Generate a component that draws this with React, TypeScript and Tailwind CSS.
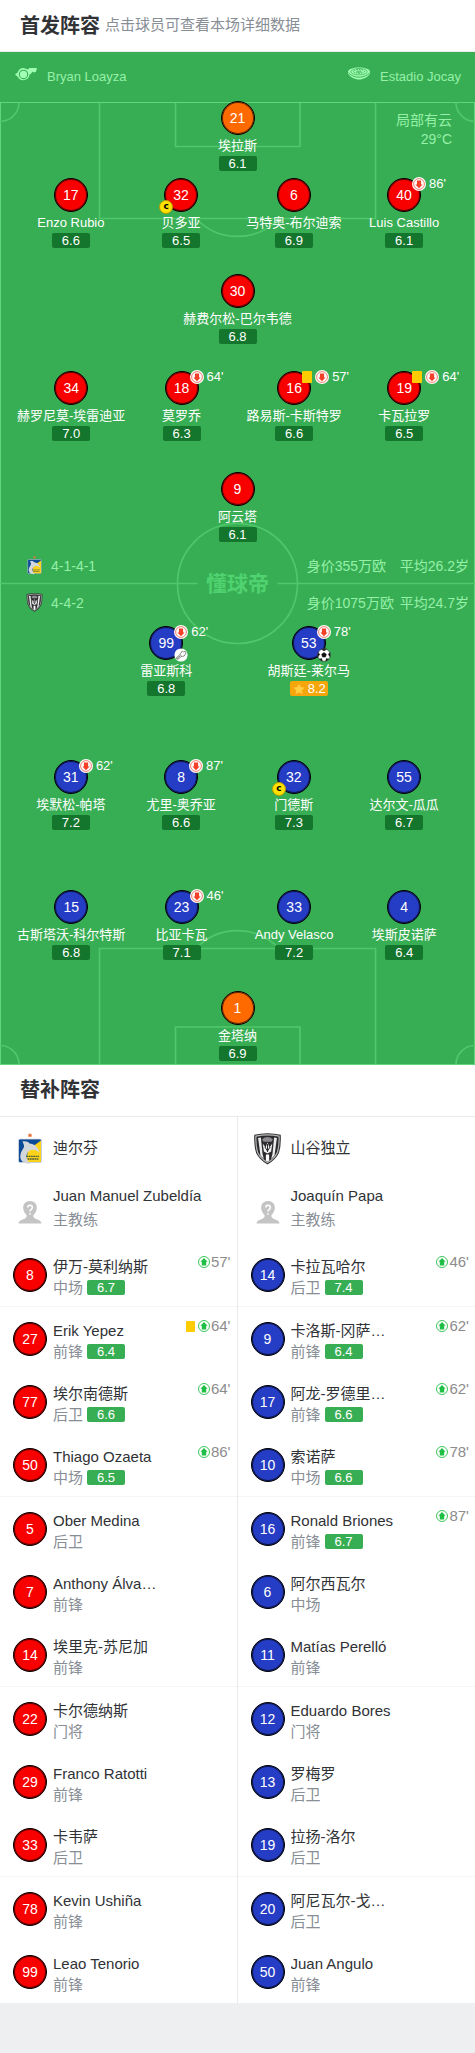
import type { ReactNode } from 'react';

type Kit = 'red' | 'blue' | 'keeper';

interface Starter {
  no: number;
  name: string;
  rating: string;
  off?: string;
  yellow?: boolean;
  captain?: boolean;
  mark?: 'assist' | 'goal';
  best?: boolean;
}

interface Line {
  kit: Kit;
  gap: string;
  players: Starter[];
}

interface Sub {
  no: number;
  name: string;
  pos: string;
  rating?: string;
  on?: string;
  yellow?: boolean;
}

const HOME_LINES: Line[] = [
  { kit: 'keeper', gap: '', players: [{ no: 21, name: '埃拉斯', rating: '6.1' }] },
  {
    kit: 'red',
    gap: 'mt-[7px]',
    players: [
      { no: 17, name: 'Enzo Rubio', rating: '6.6' },
      { no: 32, name: '贝多亚', rating: '6.5', captain: true },
      { no: 6, name: '马特奥-布尔迪索', rating: '6.9' },
      { no: 40, name: 'Luis Castillo', rating: '6.1', off: "86'" },
    ],
  },
  { kit: 'red', gap: 'mt-[26px]', players: [{ no: 30, name: '赫费尔松-巴尔韦德', rating: '6.8' }] },
  {
    kit: 'red',
    gap: 'mt-[27px]',
    players: [
      { no: 34, name: '赫罗尼莫-埃雷迪亚', rating: '7.0' },
      { no: 18, name: '莫罗乔', rating: '6.3', off: "64'" },
      { no: 16, name: '路易斯-卡斯特罗', rating: '6.6', off: "57'", yellow: true },
      { no: 19, name: '卡瓦拉罗', rating: '6.5', off: "64'", yellow: true },
    ],
  },
  { kit: 'red', gap: 'mt-[31px]', players: [{ no: 9, name: '阿云塔', rating: '6.1' }] },
];

const AWAY_LINES: Line[] = [
  {
    kit: 'blue',
    gap: '',
    players: [
      { no: 99, name: '雷亚斯科', rating: '6.8', off: "62'", mark: 'assist' },
      { no: 53, name: '胡斯廷-莱尔马', rating: '8.2', off: "78'", mark: 'goal', best: true },
    ],
  },
  {
    kit: 'blue',
    gap: 'mt-16',
    players: [
      { no: 31, name: '埃默松-帕塔', rating: '7.2', off: "62'" },
      { no: 8, name: '尤里-奥乔亚', rating: '6.6', off: "87'" },
      { no: 32, name: '门德斯', rating: '7.3', captain: true },
      { no: 55, name: '达尔文-瓜瓜', rating: '6.7' },
    ],
  },
  {
    kit: 'blue',
    gap: 'mt-15',
    players: [
      { no: 15, name: '古斯塔沃-科尔特斯', rating: '6.8' },
      { no: 23, name: '比亚卡瓦', rating: '7.1', off: "46'" },
      { no: 33, name: 'Andy Velasco', rating: '7.2' },
      { no: 4, name: '埃斯皮诺萨', rating: '6.4' },
    ],
  },
  { kit: 'keeper', gap: 'mt-[31px]', players: [{ no: 1, name: '金塔纳', rating: '6.9' }] },
];

const HOME_SUBS: Sub[] = [
  { no: 8, name: '伊万-莫利纳斯', pos: '中场', rating: '6.7', on: "57'" },
  { no: 27, name: 'Erik Yepez', pos: '前锋', rating: '6.4', on: "64'", yellow: true },
  { no: 77, name: '埃尔南德斯', pos: '后卫', rating: '6.6', on: "64'" },
  { no: 50, name: 'Thiago Ozaeta', pos: '中场', rating: '6.5', on: "86'" },
  { no: 5, name: 'Ober Medina', pos: '后卫' },
  { no: 7, name: 'Anthony Álva…', pos: '前锋' },
  { no: 14, name: '埃里克-苏尼加', pos: '前锋' },
  { no: 22, name: '卡尔德纳斯', pos: '门将' },
  { no: 29, name: 'Franco Ratotti', pos: '前锋' },
  { no: 33, name: '卡韦萨', pos: '后卫' },
  { no: 78, name: 'Kevin Ushiña', pos: '前锋' },
  { no: 99, name: 'Leao Tenorio', pos: '前锋' },
];

const AWAY_SUBS: Sub[] = [
  { no: 14, name: '卡拉瓦哈尔', pos: '后卫', rating: '7.4', on: "46'" },
  { no: 9, name: '卡洛斯-冈萨…', pos: '前锋', rating: '6.4', on: "62'" },
  { no: 17, name: '阿龙-罗德里…', pos: '前锋', rating: '6.6', on: "62'" },
  { no: 10, name: '索诺萨', pos: '中场', rating: '6.6', on: "78'" },
  { no: 16, name: 'Ronald Briones', pos: '前锋', rating: '6.7', on: "87'" },
  { no: 6, name: '阿尔西瓦尔', pos: '中场' },
  { no: 11, name: 'Matías Perelló', pos: '前锋' },
  { no: 12, name: 'Eduardo Bores', pos: '门将' },
  { no: 13, name: '罗梅罗', pos: '后卫' },
  { no: 19, name: '拉扬-洛尔', pos: '后卫' },
  { no: 20, name: '阿尼瓦尔-戈…', pos: '后卫' },
  { no: 50, name: 'Juan Angulo', pos: '前锋' },
];

const KIT_BG: Record<Kit, string> = {
  red: 'bg-[#f80000]',
  blue: 'bg-[#253cc4]',
  keeper: 'bg-[#ff6a00]',
};

const LINE_COLS: Record<number, string> = {
  1: 'grid-cols-1',
  2: 'grid-cols-2 px-[95px]',
  4: 'grid-cols-[108fr_113fr_113fr_108fr] px-[17px]',
};

function Shirt({ no, kit }: { no: number; kit: Kit }) {
  return (
    <span
      className={`flex size-[34px] shrink-0 items-center justify-center rounded-full border border-black text-sm text-white ring-1 ring-black/60 ring-inset ${KIT_BG[kit]}`}
    >
      {no}
    </span>
  );
}

function SubArrow({ dir }: { dir: 'in' | 'out' }) {
  if (dir === 'in') {
    return (
      <svg viewBox="0 0 12 12" className="size-3 shrink-0" aria-hidden="true">
        <circle cx="6" cy="6" r="5.5" fill="#fff" stroke="#28bf4b" strokeWidth="0.9" />
        <path d="M6 2 L9.6 5.8 H8.2 V9.4 H3.8 V5.8 H2.4 Z" fill="#1fbf45" />
      </svg>
    );
  }
  return (
    <svg viewBox="0 0 14 14" className="size-[14px] shrink-0" aria-hidden="true">
      <circle cx="7" cy="7" r="7" fill="#fff" />
      <circle cx="7" cy="7" r="5.4" fill="none" stroke="#f25b48" strokeWidth="0.8" />
      <path d="M7 11.2 L10.6 7.4 H9.1 V3.5 H4.9 V7.4 H3.4 Z" fill="#f43f28" />
    </svg>
  );
}

function YellowCard({ className }: { className: string }) {
  return <span className={`shrink-0 rounded-[1px] bg-[#ffcc00] ${className}`} />;
}

function AssistIcon() {
  return (
    <svg viewBox="0 0 14 14" className="size-[14px]" aria-hidden="true">
      <circle cx="7" cy="7" r="6.6" fill="#fff" />
      <path
        d="M2.4 9.6 L6 6.6 L8.2 3 L9.4 4 L11.2 3.2 L12 5 L10.2 8 L7.2 8.6 L4 11.2 L2.4 10.8 Z M6 6.6 L7.6 8 M2.8 10.6 L6.2 8"
        fill="#fff"
        stroke="#6d6d6d"
        strokeWidth="0.8"
      />
    </svg>
  );
}

function GoalIcon() {
  return (
    <svg viewBox="0 0 14 14" className="size-[14px]" aria-hidden="true">
      <circle cx="7" cy="7" r="6.3" fill="#fff" stroke="#222" strokeWidth="0.6" />
      <g fill="#111" stroke="#111" strokeWidth="0.5">
        <path d="M7 4.5 L9.4 6.3 L8.5 9.1 H5.5 L4.6 6.3 Z" />
        <path d="M4.6 1.3 H9.4 L7 2.9 Z" />
        <path d="M12.9 4.6 L13.1 8.4 L11.2 6.6 Z" />
        <path d="M1.1 4.6 L0.9 8.4 L2.8 6.6 Z" />
        <path d="M2.4 11.2 L5.2 13 L4.6 10.5 Z" />
        <path d="M11.6 11.2 L8.8 13 L9.4 10.5 Z" />
      </g>
    </svg>
  );
}

function StarIcon() {
  return (
    <svg viewBox="0 0 14 14" className="size-[14px] shrink-0" aria-hidden="true">
      <path
        d="M7 0.8 L9 4.7 L13.4 5.3 L10.2 8.4 L11 12.9 L7 10.8 L3 12.9 L3.8 8.4 L0.6 5.3 L5 4.7 Z"
        fill="#ffcf3f"
        stroke="#ff961c"
        strokeWidth="0.7"
        strokeLinejoin="round"
      />
    </svg>
  );
}

function WhistleIcon() {
  return (
    <svg viewBox="0 0 22 14" className="h-[14px] w-[22px]" aria-hidden="true">
      <path
        d="M8.5 1 L13 2.4 L14.4 1 H22 L21 4.8 L18.8 5.6 L17.4 4.6 L16.2 6.4 L14.6 7.6 A6.4 6.4 0 0 1 2.5 9.6 L0 7.6 L2.6 5.6 A6.4 6.4 0 0 1 8.5 1 Z"
        fill="#a0ffb3"
      />
      <circle cx="8.5" cy="7.4" r="4.2" fill="none" stroke="#38ae54" strokeWidth="1.1" />
    </svg>
  );
}

function StadiumIcon() {
  return (
    <svg viewBox="0 0 22 13" className="h-[13px] w-[22px]" aria-hidden="true">
      <path d="M0 5 C0 2 5 0.4 11 0.4 S22 2 22 5 V6.6 C20 10.4 15 12.6 11 12.6 S2 10.4 0 6.6 Z" fill="#a0ffb3" />
      <g fill="none" stroke="#38ae54">
        <path d="M0.4 5.8 C3 8.6 7 10.2 11 10.2 S19 8.6 21.6 5.8" strokeWidth="0.9" />
        <ellipse cx="11" cy="4.7" rx="8.2" ry="3.2" strokeWidth="0.7" />
        <ellipse cx="11" cy="4.4" rx="5.6" ry="1.9" strokeWidth="1" strokeDasharray="1.6 1" />
        <ellipse cx="11" cy="4.7" rx="2.4" ry="0.6" strokeWidth="0.8" />
      </g>
    </svg>
  );
}

function DelfinBadge({ className }: { className: string }) {
  return (
    <svg viewBox="0 0 24 32" className={className} aria-hidden="true">
      <path d="M12 0 L13 1.4 L14.4 1.6 L13.4 2.8 L13.6 4.2 L12 3.6 L10.4 4.2 L10.6 2.8 L9.6 1.6 L11 1.4 Z" fill="#e8743a" />
      <rect x="0.5" y="6" width="23" height="23.5" rx="1.5" fill="#0b4a96" stroke="#d8dde2" strokeWidth="0.8" />
      <path d="M23 7.5 V29 H8 L10 17 Z" fill="#fbd31b" />
      <path
        d="M4.5 8.5 C8 8 10.5 9 11.5 10.6 C16 11 20.5 14 21.5 20 C18 16 13 15.6 10 19 C7.5 22 8 26 12 30.6 C5 31 1 27 2.6 21 C3.6 17 6.4 15.4 6 12.6 C5.8 11 5 9.8 4.5 8.5 Z"
        fill="#d3d7db"
      />
      <path d="M8.4 23.4 H21 M9.6 26 H20.4" stroke="#4d5d3c" strokeWidth="1.3" strokeDasharray="1.8 0.5" />
    </svg>
  );
}

function IndependienteBadge({ className }: { className: string }) {
  return (
    <svg viewBox="0 0 28 32" className={className} aria-hidden="true">
      <path d="M0.8 1.8 Q14 -1.2 27.2 1.8 Q27.8 13 25.4 20 Q22 27 14 31.4 Q6 27 2.6 20 Q0.2 13 0.8 1.8 Z" fill="#2c2a2d" />
      <path
        d="M2.4 3.2 Q14 0.6 25.6 3.2 Q26 13 24 19.2 Q21 25.6 14 29.6 Q7 25.6 4 19.2 Q2 13 2.4 3.2 Z"
        fill="none"
        stroke="#b9b9bb"
        strokeWidth="1.2"
      />
      <path d="M4.6 5 L7.4 4.6 L9 21 L10.4 26 L7 22.6 Z M23.4 5 L20.6 4.6 L19 21 L17.6 26 L21 22.6 Z" fill="#ececed" />
      <path d="M8.6 6.2 Q14 1.8 19.4 6.2 L18 8.8 H10 Z" fill="#8d8c90" />
      <path d="M9.2 10.6 L12 14.6 L14 9.6 L16 14.6 L18.8 10.6 L17.6 18.4 L14 20.4 L10.4 18.4 Z" fill="#f2f2f2" />
      <path d="M14 11 V19 M11.4 14 L14 18 L16.6 14" fill="none" stroke="#2c2a2d" strokeWidth="1" />
      <path d="M12.4 21.4 H15.6 V27.6 L14 28.6 L12.4 27.6 Z" fill="#fff" />
    </svg>
  );
}

function CoachAvatar() {
  return (
    <svg viewBox="0 0 24 24" className="size-6 shrink-0" aria-hidden="true">
      <path
        d="M12 1 C16.4 1 19 4 18.8 8 C18.6 12 16.6 13.6 15.4 15.2 C15 17.4 16.6 18.4 19.4 19.4 C22 20.4 23 21 23.6 23.4 H0.4 C1 21 2 20.4 4.6 19.4 C7.4 18.4 9 17.4 8.6 15.2 C7.4 13.6 5.4 12 5.2 8 C5 4 7.6 1 12 1 Z"
        fill="#c4c4c4"
      />
      <path d="M9.8 7.6 C9.8 4.6 14.4 4.6 14.4 7.6 C14.4 9.4 12 9.4 12 11.6" fill="none" stroke="#fff" strokeWidth="1.5" />
      <circle cx="12" cy="13.8" r="0.9" fill="#fff" />
    </svg>
  );
}

function PitchPlayer({ player, kit }: { player: Starter; kit: Kit }) {
  return (
    <div className="flex flex-col items-center">
      <div className="relative">
        <Shirt no={player.no} kit={kit} />
        {player.off && (
          <div className="absolute -top-px left-[25px] flex items-center gap-[3px]">
            {player.yellow && <YellowCard className="h-3 w-[10px]" />}
            <SubArrow dir="out" />
            <span className="text-[13px] leading-[14px]">{player.off}</span>
          </div>
        )}
        {player.captain && (
          <span className="absolute top-[22px] -left-[5px] flex size-[14px] items-center justify-center rounded-full border border-[#b89c00] bg-[#ffe100] pb-px font-['DejaVu_Sans',sans-serif] text-[9px] leading-none font-bold text-black">
            c
          </span>
        )}
        {player.mark && (
          <span className="absolute top-[22px] left-[25px]">
            {player.mark === 'goal' ? <GoalIcon /> : <AssistIcon />}
          </span>
        )}
      </div>
      <span className="pt-px text-[13px] leading-5 whitespace-nowrap">{player.name}</span>
      {player.best ? (
        <span className="flex h-[15px] w-[38px] items-center justify-center gap-[2px] rounded-[2px] bg-[#f5a70a] text-[13px] leading-[15px]">
          <StarIcon />
          {player.rating}
        </span>
      ) : (
        <span className="h-[15px] w-[38px] rounded-[2px] bg-[#14752c] text-center text-[13px] leading-[15px]">
          {player.rating}
        </span>
      )}
    </div>
  );
}

function PitchLine({ line }: { line: Line }) {
  return (
    <div className={`grid ${LINE_COLS[line.players.length]} ${line.gap}`}>
      {line.players.map((player) => (
        <PitchPlayer key={player.no} player={player} kit={line.kit} />
      ))}
    </div>
  );
}

// Pitch markings, stretched behind the players
function PitchMarkings() {
  return (
    <svg
      viewBox="0 0 475 964"
      preserveAspectRatio="none"
      className="absolute inset-0 h-full w-full"
      fill="none"
      stroke="#4fc76b"
      strokeWidth="1.7"
      aria-hidden="true"
    >
      <rect x="0.5" y="1.5" width="474" height="962" stroke="#5fd67b" strokeWidth="1" />
      <path d="M99.5 2 V117.5 H375.5 V2 M175.5 2 V45.5 H300 V2" />
      <path d="M99.5 963 V847.5 H375.5 V963 M175.5 963 V926 H300 V963" />
      <path d="M196 117.5 A57 57 0 0 0 279 117.5 M196 847.5 A57 57 0 0 1 279 847.5" />
      <path d="M0 20.5 A19 19 0 0 0 19 1.5 M475 20.5 A19 19 0 0 1 456 1.5 M0 944.5 A19 19 0 0 1 19 963.5 M475 944.5 A19 19 0 0 0 456 963.5" />
      <circle cx="237.5" cy="482.5" r="60" />
      <path d="M0 482.5 H197.5 M277.5 482.5 H475" />
    </svg>
  );
}

function FormationRow({ badge, shape, value, age }: { badge: ReactNode; shape: string; value: string; age: string }) {
  return (
    <div className="flex h-[37px] items-center pr-[6px] pl-[25px] text-sm text-[#95f0a8]">
      {badge}
      <span className="ml-[7px] flex-1">{shape}</span>
      <span className="w-[93px] whitespace-nowrap">{value}</span>
      <span className="whitespace-nowrap">{age}</span>
    </div>
  );
}

function SubRow({ sub, kit, divided }: { sub: Sub; kit: Kit; divided: boolean }) {
  return (
    <li className={`flex pr-[6px] pl-[13px] ${divided ? 'border-b border-[#f4f5f6]' : ''}`}>
      <div className="flex h-[63px] items-center">
        <Shirt no={sub.no} kit={kit} />
      </div>
      <div className="ml-[6px] min-w-0 flex-1 pt-[13px]">
        <p className="truncate text-[15px] leading-[21px] text-[#303236]">{sub.name}</p>
        <p className="flex items-center gap-1 text-[15px] leading-[21px] text-[#888e95]">
          {sub.pos}
          {sub.rating && (
            <span className="h-[15px] w-[38px] rounded-[2px] bg-[#38ae54] text-center text-[13px] leading-[15px] text-white">
              {sub.rating}
            </span>
          )}
        </p>
      </div>
      {sub.on && (
        <div className="flex h-[38px] items-center text-[15px] text-[#8c8c8c]">
          {sub.yellow && <YellowCard className="mr-[3px] h-[11px] w-[9px]" />}
          <SubArrow dir="in" />
          <span className="ml-px">{sub.on}</span>
        </div>
      )}
    </li>
  );
}

interface BenchProps {
  team: string;
  badge: ReactNode;
  coach: string;
  subs: Sub[];
  kit: Kit;
}

function Bench({ team, badge, coach, subs, kit }: BenchProps) {
  return (
    <section className="min-w-0">
      <div className="flex h-[63px] items-center gap-[6px] pl-[13px] text-[15px] text-[#303236]">
        <span className="flex w-[34px] justify-center">{badge}</span>
        <h3>{team}</h3>
      </div>
      <div className="flex h-[63px] items-center gap-[6px] pl-[13px]">
        <span className="flex w-[34px] justify-center">
          <CoachAvatar />
        </span>
        <div className="pb-[7px] text-[15px] leading-6">
          <p className="whitespace-nowrap text-[#303236]">{coach}</p>
          <p className="text-[#888e95]">主教练</p>
        </div>
      </div>
      <ul>
        {subs.map((sub, i) => (
          <SubRow key={sub.no} sub={sub} kit={kit} divided={i % 3 === 0} />
        ))}
      </ul>
    </section>
  );
}

export default function App() {
  return (
    <main className="bg-[#eeeff1] pb-[50px] font-['Liberation_Sans','Noto_Sans_CJK_SC',sans-serif]">
      <header className="flex h-[52px] items-center gap-[5px] border-b border-[#ececee] bg-white px-5">
        <h2 className="text-xl font-bold text-[#303236]">首发阵容</h2>
        <p className="text-[15px] text-[#888e95]">点击球员可查看本场详细数据</p>
      </header>

      <div className="bg-[#38ae54] text-white">
        <div className="flex h-[49px] items-center justify-between pr-[14px] pl-[15px] text-[13px] text-[#95f0a8]">
          <div className="flex items-start gap-[10px]">
            <WhistleIcon />
            <span>Bryan Loayza</span>
          </div>
          <div className="flex items-start gap-[10px]">
            <StadiumIcon />
            <span>Estadio Jocay</span>
          </div>
        </div>

        <div className="relative pb-1">
          <PitchMarkings />
          <p className="absolute top-[10px] right-[23px] text-right text-sm leading-[19px] text-[#95f0a8]">
            局部有云
            <br />
            29°C
          </p>
          <div className="relative">
            {HOME_LINES.map((line, i) => (
              <PitchLine key={i} line={line} />
            ))}
            <div className="relative py-[5px]">
              <span className="absolute inset-0 flex items-center justify-center text-[21px] font-bold text-[#4fd26f]">
                懂球帝
              </span>
              <FormationRow
                badge={<DelfinBadge className="h-[19px] w-[19px]" />}
                shape="4-1-4-1"
                value="身价355万欧"
                age="平均26.2岁"
              />
              <FormationRow
                badge={<IndependienteBadge className="h-[19px] w-[19px]" />}
                shape="4-4-2"
                value="身价1075万欧"
                age="平均24.7岁"
              />
            </div>
            {AWAY_LINES.map((line, i) => (
              <PitchLine key={i} line={line} />
            ))}
          </div>
        </div>
      </div>

      <div className="bg-white">
        <h2 className="flex h-[52px] items-center border-b border-[#e9eaec] px-5 pb-[2px] text-xl font-bold text-[#303236]">
          替补阵容
        </h2>
        <div className="grid grid-cols-2 divide-x divide-[#e9eaec]">
          <Bench
            team="迪尔芬"
            badge={<DelfinBadge className="h-8 w-6" />}
            coach="Juan Manuel Zubeldía"
            subs={HOME_SUBS}
            kit="red"
          />
          <Bench
            team="山谷独立"
            badge={<IndependienteBadge className="h-8 w-[29px]" />}
            coach="Joaquín Papa"
            subs={AWAY_SUBS}
            kit="blue"
          />
        </div>
      </div>
    </main>
  );
}
